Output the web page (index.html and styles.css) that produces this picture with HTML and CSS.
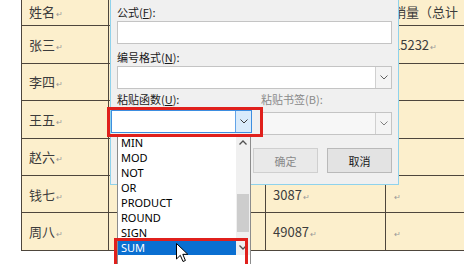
FILE: index.html
```html
<!DOCTYPE html>
<html lang="zh">
<head>
  <meta charset="UTF-8">
  <title>公式</title>
  <link rel="stylesheet" href="styles.css">
</head>
<body>
  <table class="sheet">
    <colgroup>
      <col class="c1"><col class="c2"><col class="c3"><col class="c4">
    </colgroup>
    <tr class="head"><td>姓名<span class="pm">↵</span></td><td></td><td></td><td>销量（总计</td></tr>
    <tr><td>张三<span class="pm">↵</span></td><td></td><td></td><td>15232<span class="pm">↵</span></td></tr>
    <tr><td>李四<span class="pm">↵</span></td><td></td><td></td><td></td></tr>
    <tr><td>王五<span class="pm">↵</span></td><td></td><td></td><td></td></tr>
    <tr><td>赵六<span class="pm">↵</span></td><td></td><td></td><td></td></tr>
    <tr><td>钱七<span class="pm">↵</span></td><td></td><td>3087<span class="pm">↵</span></td><td><span class="pm">↵</span></td></tr>
    <tr><td>周八<span class="pm">↵</span></td><td></td><td>49087<span class="pm">↵</span></td><td><span class="pm">↵</span></td></tr>
  </table>

  <div class="dialog">
    <div class="label">公式(<u>F</u>):</div>
    <div class="field"></div>
    <div class="label gap">编号格式(<u>N</u>):</div>
    <div class="field select">
      <span class="arrow"><svg width="8" height="5" viewBox="0 0 8 5"><polyline points="0.5,0.5 4,4 7.5,0.5" fill="none" stroke="#606060"/></svg></span>
    </div>
    <div class="pair labels">
      <div class="label">粘贴函数(<u>U</u>):</div>
      <div class="label off">粘贴书签(B):</div>
    </div>
    <div class="pair">
      <div class="combo">
        <span class="arrow hot"><svg width="8" height="5" viewBox="0 0 8 5"><polyline points="0.5,0.5 4,4 7.5,0.5" fill="none" stroke="#3a3a3a"/></svg></span>
      </div>
      <div class="field select dim">
        <span class="arrow"><svg width="8" height="5" viewBox="0 0 8 5"><polyline points="0.5,0.5 4,4 7.5,0.5" fill="none" stroke="#808080"/></svg></span>
      </div>
    </div>
    <div class="buttons">
      <button class="btn off">确定</button>
      <button class="btn">取消</button>
    </div>
  </div>

  <div class="list">
    <div class="items">
      <div class="item">MIN</div>
      <div class="item">MOD</div>
      <div class="item">NOT</div>
      <div class="item">OR</div>
      <div class="item">PRODUCT</div>
      <div class="item">ROUND</div>
      <div class="item">SIGN</div>
      <div class="item sel">SUM</div>
    </div>
    <div class="scroll">
      <span class="sarrow"><svg width="8" height="5" viewBox="0 0 8 5"><polyline points="0.5,4.5 4,1 7.5,4.5" fill="none" stroke="#505050" stroke-width="1.3"/></svg></span>
      <span class="thumb"></span>
      <span class="sarrow down"><svg width="8" height="5" viewBox="0 0 8 5"><polyline points="0.5,0.5 4,4 7.5,0.5" fill="none" stroke="#505050" stroke-width="1.3"/></svg></span>
    </div>
  </div>

  <div class="mark mark-combo"></div>
  <div class="mark mark-sum"></div>

  <svg class="cursor" width="13" height="20" viewBox="0 0 13 20">
    <path d="M0.5,0.5 L0.5,16 L4.3,12.3 L7,18.5 L9.4,17.5 L6.8,11.3 L11.8,11.3 Z" fill="#fff" stroke="#000" stroke-width="1"/>
  </svg>
</body>
</html>
```

FILE: styles.css
```css
body {
  margin: 0;
  width: 464px;
  height: 264px;
  overflow: hidden;
  position: relative;
  background: #fff;
  font-family: "Noto Sans CJK SC", sans-serif;
}

.sheet {
  border-collapse: collapse;
  table-layout: fixed;
  margin: -12px 0 0 21px;
  width: 500px;
  background: #fcefcc;
  color: #3c3c3c;
  font-size: 13px;
}

.c1 { width: 87px; }
.c2 { width: 157px; }
.c3 { width: 120px; }
.c4 { width: 136px; }

.sheet tr {
  height: 37.4px;
}

.sheet td {
  border: 1px solid #4e463c;
  padding: 0 7px;
  white-space: nowrap;
  overflow: hidden;
  vertical-align: middle;
}

.sheet .head td {
  padding-top: 8px;
}

.pm {
  font-size: 8px;
  color: #999;
  margin-left: 1px;
}

/* dialog */
.dialog {
  position: absolute;
  left: 110px;
  top: 0;
  width: 289px;
  height: 185px;
  box-sizing: border-box;
  padding: 4px 6px 0 6px;
  background: #f0f0f0;
  border: 1px solid #8fd2ec;
  border-top: none;
  font-size: 11px;
  color: #1a1a1a;
}

.label {
  height: 16px;
  line-height: 16px;
}

.label.gap {
  margin-top: 5px;
}

.label.off {
  color: #8a8a8a;
}

.field {
  height: 23px;
  margin-top: 1px;
  box-sizing: border-box;
  background: #fff;
  border: 1px solid #c4c4c4;
  position: relative;
}

.select {
  display: flex;
  justify-content: flex-end;
}

.arrow {
  width: 15px;
  display: flex;
  align-items: center;
  justify-content: center;
  border-left: 1px solid #d0d0d0;
  background: #f4f4f4;
}

.pair {
  display: grid;
  grid-template-columns: 144px 1fr;
}

.pair.labels {
  margin-top: 2px;
}

.pair .combo {
  margin: 3px 0 0 -6px;
  width: 141px;
  height: 23px;
  box-sizing: border-box;
  background: #fff;
  border: 1px solid #3d8ee0;
  display: flex;
  justify-content: flex-end;
}

.arrow.hot {
  background: #d9ebfb;
  border-left: 1px solid #62a4e8;
}

.pair .select.dim {
  margin-top: 5px;
  background: #f7f7f7;
}

.buttons {
  display: flex;
  justify-content: flex-end;
  gap: 9px;
  margin-top: 13px;
}

.btn {
  width: 65px;
  height: 25px;
  font-family: "Noto Sans CJK SC", sans-serif;
  font-size: 11px;
  color: #1a1a1a;
  background: #e3e3e3;
  border: 1px solid #b9b9b9;
  padding: 0;
}

.btn.off {
  color: #8a8a8a;
  background: #e9e9e9;
  border-color: #cfcfcf;
}

/* dropdown list */
.list {
  position: absolute;
  left: 117px;
  top: 134px;
  width: 134px;
  height: 130px;
  box-sizing: border-box;
  background: #fff;
  border: 1px solid #8c8c8c;
  border-bottom: none;
  display: flex;
  align-items: flex-start;
}

.items {
  flex: 1;
}

.item {
  height: 15px;
  line-height: 15px;
  padding-left: 3px;
  font-family: "Noto Sans", sans-serif;
  font-size: 11px;
  color: #000;
}

.item.sel {
  background: #0a6fd1;
  color: #fff;
}

.scroll {
  width: 14px;
  height: 120px;
  background: #f0f0f0;
  display: flex;
  flex-direction: column;
  align-items: center;
}

.sarrow {
  height: 15px;
  display: flex;
  align-items: center;
}

.thumb {
  width: 12px;
  height: 38px;
  margin-top: 44px;
  background: #cdcdcd;
}

.sarrow.down {
  margin-top: auto;
}

/* red marks */
.mark {
  position: absolute;
  border: 3px solid #e0201c;
  box-sizing: border-box;
}

.mark-combo {
  left: 107px;
  top: 107px;
  width: 156px;
  height: 30px;
}

.mark-sum {
  left: 114px;
  top: 238px;
  width: 134px;
  height: 30px;
}

.cursor {
  position: absolute;
  left: 176px;
  top: 243px;
}
```
